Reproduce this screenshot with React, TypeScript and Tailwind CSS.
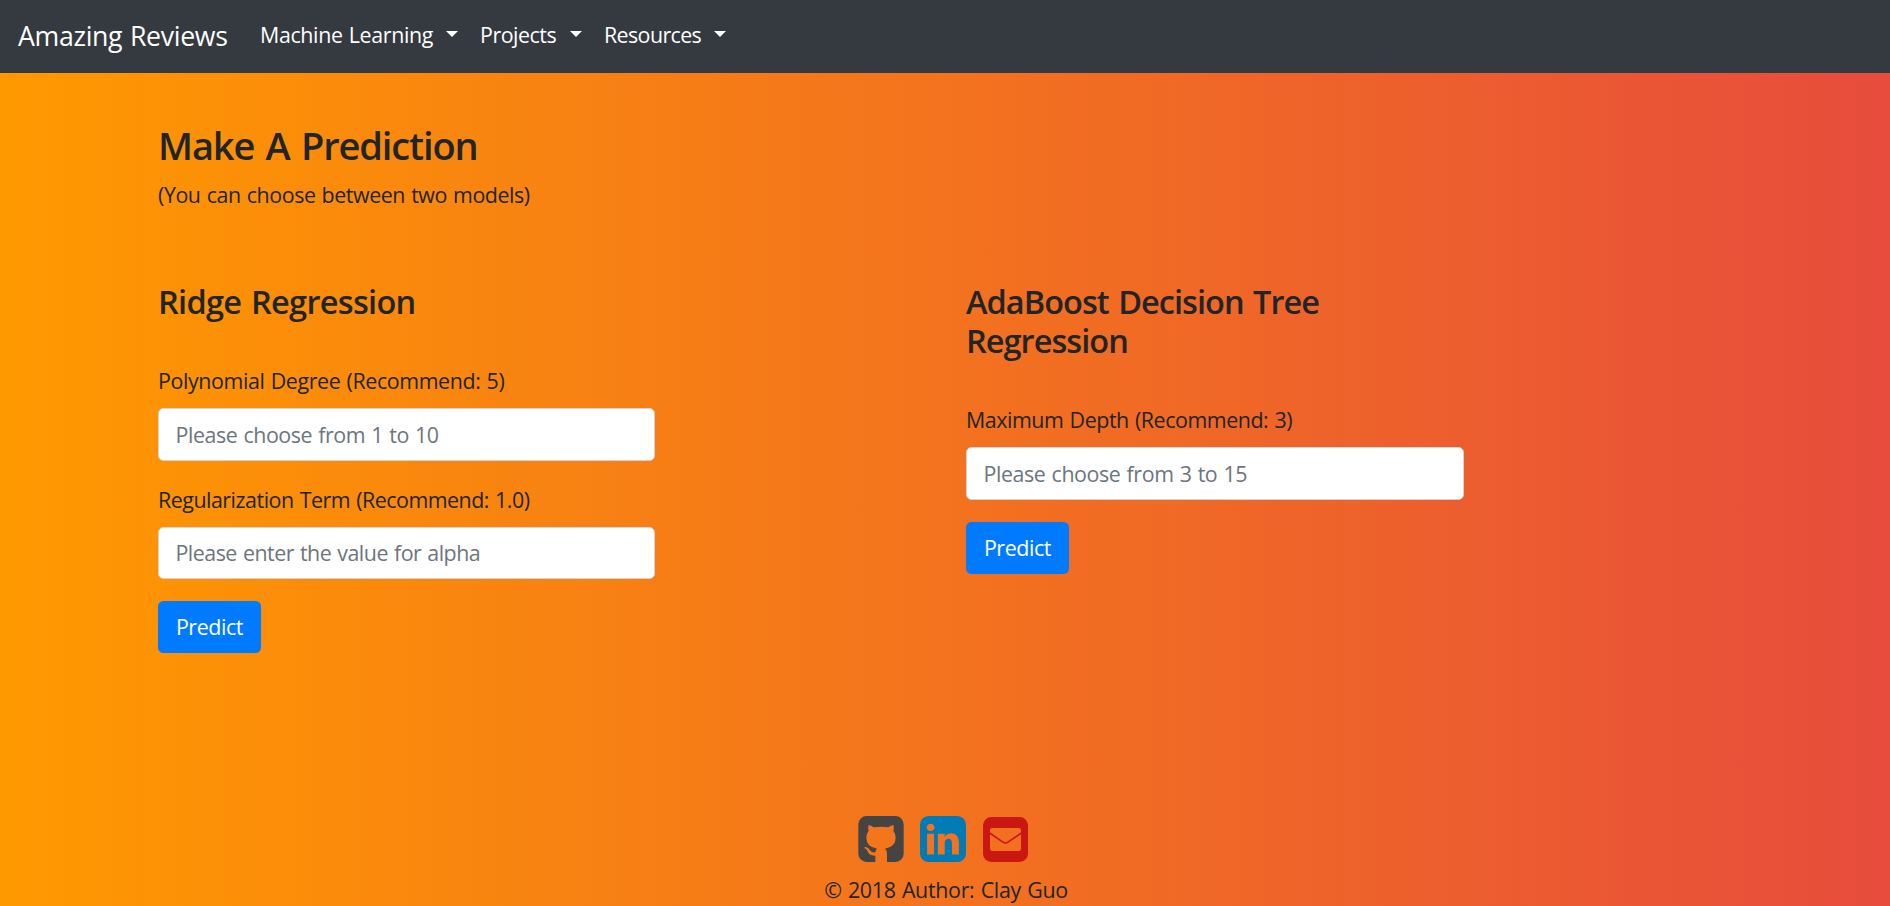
function NavItem({ label, width, tracking }: { label: string; width: string; tracking: string }) {
  return (
    <a className={`flex items-center justify-between text-[21.4px] leading-[33px] text-white ${width}`}>
      <span className={`-mt-[5px] whitespace-nowrap ${tracking}`}>{label}</span>
      <span className="mb-[5px] h-0 w-0 border-x-[6.5px] border-t-[6.5px] border-x-transparent border-t-white" />
    </a>
  );
}

type FieldProps = { label: string; placeholder: string; labelTracking: string; inputTracking: string };

function Field({ label, placeholder, labelTracking, inputTracking }: FieldProps) {
  return (
    <label className="block">
      <span className={`block h-[33px] leading-[33px] ${labelTracking}`}>{label}</span>
      <input
        className={`mt-[11px] block h-[52.3px] w-full rounded-[5.5px] border border-[#ced4da] bg-white px-[16.5px] text-[#495057] [word-spacing:1px] outline-none placeholder:text-[#6c757d] placeholder:opacity-100 ${inputTracking}`}
        placeholder={placeholder}
      />
    </label>
  );
}

function PredictButton() {
  return (
    <button className="mt-[22px] block h-[52px] w-[103px] rounded-[5.5px] bg-[#007bff] tracking-[-0.4px] text-white">
      Predict
    </button>
  );
}

function GithubIcon() {
  return (
    <svg viewBox="12 12 136 138" className="h-[46px] w-[46px] text-[#444444]" fill="currentColor">
      <path
        fillRule="evenodd"
        d="M37 12H123A25 25 0 0 1 148 37V125A25 25 0 0 1 123 150H37A25 25 0 0 1 12 125V37A25 25 0 0 1 37 12ZM43 39Q40 47 43 56Q36 65 36 77Q36 104 68 110Q64 114 63 121Q51 123 47 115Q42 106 34 105Q29 105 30 108Q37 111 40 118Q44 132 63 131V150H98V125Q98 114 92 110Q124 104 124 77Q124 65 117 56Q120 47 117 39Q110 40 102 46Q80 42 58 46Q50 40 43 39Z"
      />
    </svg>
  );
}

function LinkedinIcon() {
  return (
    <svg viewBox="128 128 1536 1536" className="h-[46px] w-[46px] text-[#007bb6]" fill="currentColor">
      <path d="M365 1414h231v-694h-231v694zm246-908q-1-52-36-86t-93-34-94.5 34-36.5 86q0 51 35.5 85.5t92.5 34.5h1q59 0 95-34.5t36-85.5zm585 908h231v-398q0-154-73-233t-193-79q-136 0-209 117h2v-101h-231q3 66 0 694h231v-388q0-38 7-56 15-35 45-59.5t74-24.5q116 0 116 157v371zm468-998v960q0 119-84.5 203.5t-203.5 84.5h-960q-119 0-203.5-84.5t-84.5-203.5v-960q0-119 84.5-203.5t203.5-84.5h960q119 0 203.5 84.5t84.5 203.5z" />
    </svg>
  );
}

function MailIcon() {
  return (
    <svg viewBox="15 15 135 135" className="mt-px ml-px h-[45px] w-[45px] text-[#cb1712]">
      <path
        fill="currentColor"
        fillRule="evenodd"
        d="M40 15H125A25 25 0 0 1 150 40V125A25 25 0 0 1 125 150H40A25 25 0 0 1 15 125V40A25 25 0 0 1 40 15ZM43 48A7 7 0 0 0 36 55V110A7 7 0 0 0 43 117H122A7 7 0 0 0 129 110V55A7 7 0 0 0 122 48Z"
      />
      <path d="M35 63L76 91Q82.500 95 89 91L130 63" fill="none" stroke="currentColor" strokeWidth="5" />
    </svg>
  );
}

export default function App() {
  return (
    <div className="flex h-[906px] flex-col overflow-hidden bg-linear-to-r/srgb from-[#ff9900] to-[#e74c3c] font-['Open_Sans',sans-serif] text-[21.4px] text-[#212529] [word-spacing:1px]">
      <nav className="flex h-[73px] shrink-0 items-center bg-[#343a40] pl-[18px] text-white">
        <a className="w-[242px] pb-px text-[26.7px] tracking-[-0.32px]">Amazing Reviews</a>
        <div className="flex gap-[22px]">
          <NavItem label="Machine Learning" width="w-[198px]" tracking="tracking-[-0.35px]" />
          <NavItem label="Projects" width="w-[102px]" tracking="tracking-[-0.47px]" />
          <NavItem label="Resources" width="w-[122px]" tracking="tracking-[-0.6px]" />
        </div>
      </nav>
      <main className="grow px-[158px] pt-[49px]">
        <h1 className="text-[38px] leading-[46px] font-semibold tracking-[-1.1px] [word-spacing:2.5px]">
          Make A Prediction
        </h1>
        <p className="mt-[10px] leading-[33px] tracking-[-0.43px]">(You can choose between two models)</p>
        <div className="mt-[71px] flex gap-[311px]">
          <form className="w-[497px]">
            <h2 className="text-[32.5px] leading-[39px] font-semibold tracking-[-0.7px] [word-spacing:2px]">
              Ridge Regression
            </h2>
            <div className="mt-[43.4px] flex flex-col gap-[22px]">
              <Field
                label="Polynomial Degree (Recommend: 5)"
                placeholder="Please choose from 1 to 10"
                labelTracking="tracking-[-0.38px]"
                inputTracking="tracking-[-0.43px]"
              />
              <Field
                label="Regularization Term (Recommend: 1.0)"
                placeholder="Please enter the value for alpha"
                labelTracking="tracking-[-0.48px]"
                inputTracking="tracking-[-0.5px]"
              />
            </div>
            <PredictButton />
          </form>
          <form className="w-[498px]">
            <h2 className="text-[32.5px] leading-[39px] font-semibold tracking-[-0.96px] [word-spacing:2px]">
              AdaBoost Decision Tree
              <br />
              Regression
            </h2>
            <div className="mt-[43.4px]">
              <Field
                label="Maximum Depth (Recommend: 3)"
                placeholder="Please choose from 3 to 15"
                labelTracking="tracking-[-0.43px]"
                inputTracking="tracking-[-0.41px]"
              />
            </div>
            <PredictButton />
          </form>
        </div>
      </main>
      <footer className="flex flex-col items-center">
        <div className="flex gap-4 pr-[5px]">
          <GithubIcon />
          <LinkedinIcon />
          <MailIcon />
        </div>
        <p className="mt-[11px] pl-[2px] leading-[33px] tracking-[-0.3px]">© 2018 Author: Clay Guo</p>
      </footer>
    </div>
  );
}
